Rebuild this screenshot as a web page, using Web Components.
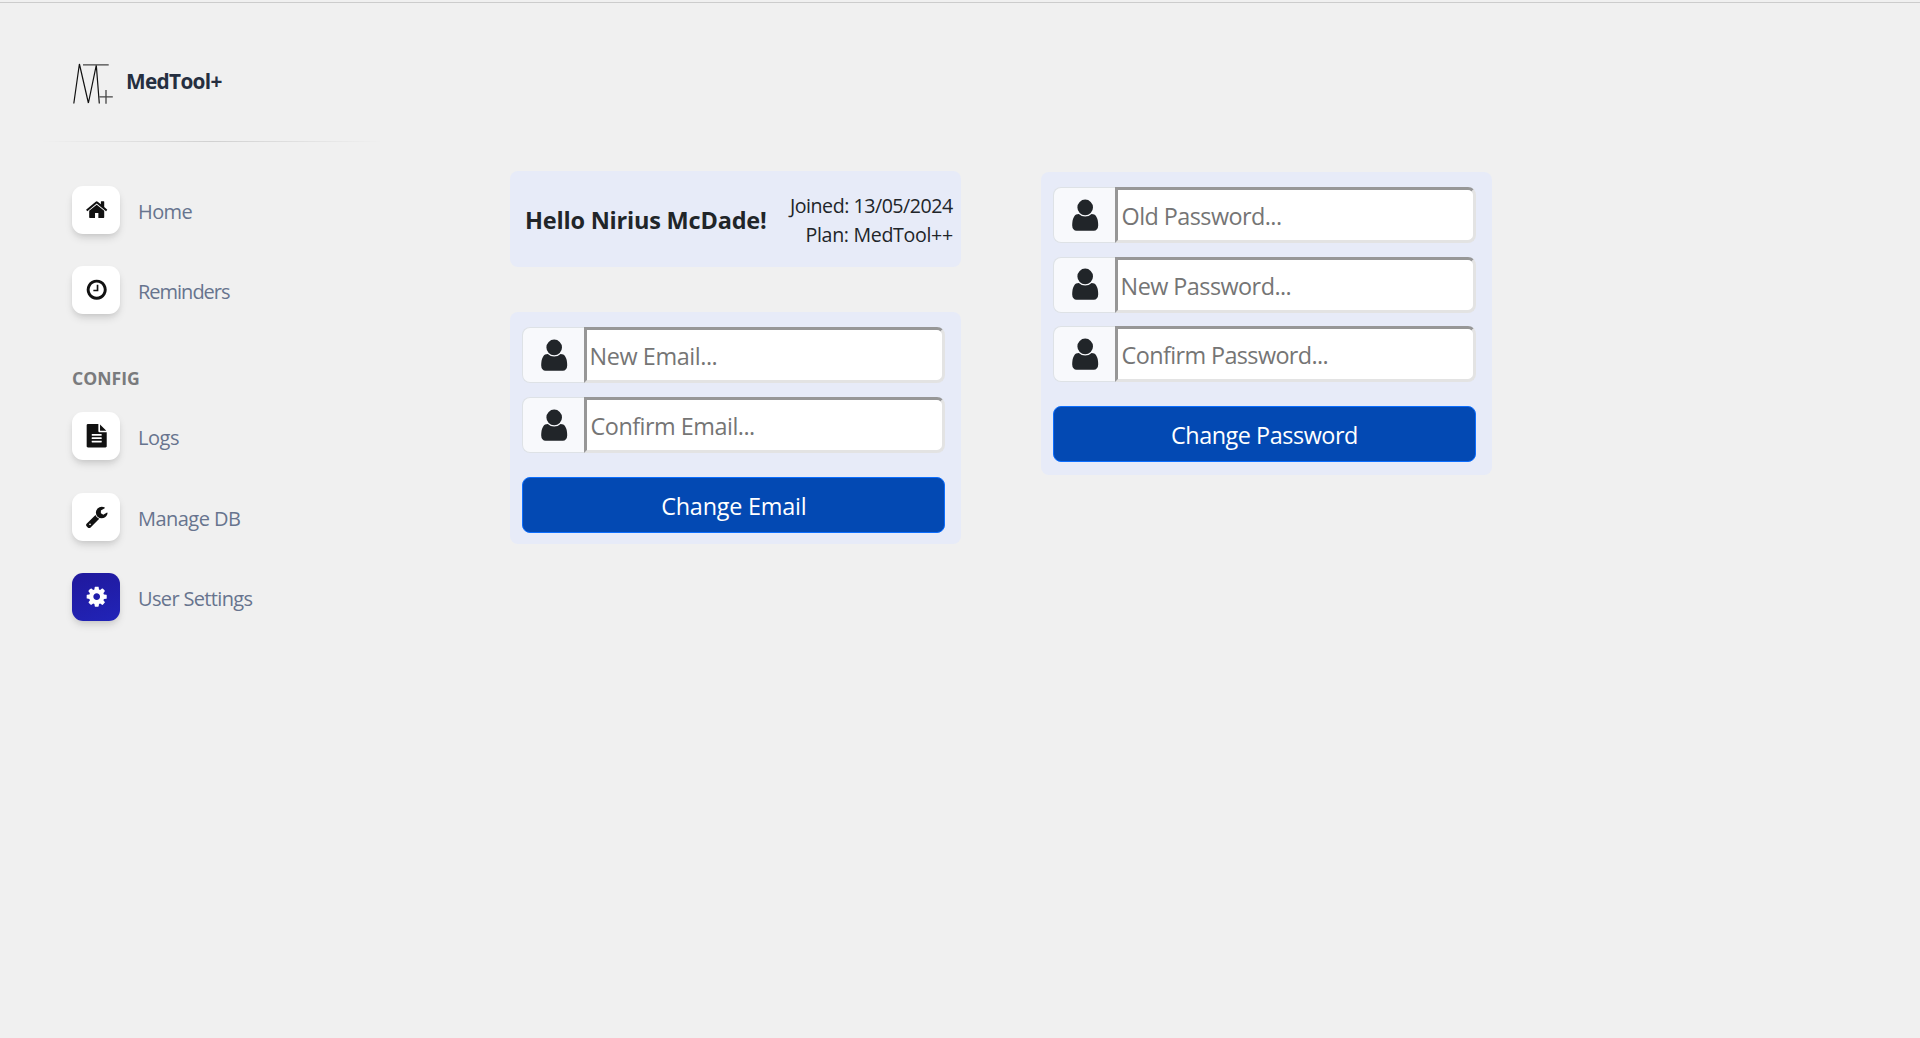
<!DOCTYPE html>
<html lang="en">
<head>
<meta charset="utf-8">
<title>MedTool+ | User Settings</title>
<style>
  html, body { margin: 0; height: 100%; }
  body { background: #f0f0f0; font-family: "Open Sans", "Noto Sans", sans-serif; overflow: hidden; }
</style>
</head>
<body>
<med-app></med-app>
<script>
const ICONS = {
  home: "M1472 992v480q0 26-19 45t-45 19h-384v-384h-256v384h-384q-26 0-45-19t-19-45v-480q0-1 .5-3t.5-3l575-474 575 474q1 2 1 6zm223-69l-62 74q-8 9-21 11h-3q-13 0-21-7l-692-577-692 577q-12 8-24 7-13-2-21-11l-62-74q-8-10-7-23.5t11-21.5l719-599q32-26 76-26t76 26l244 204v-195q0-14 9-23t23-9h192q14 0 23 9t9 23v408l219 182q10 8 11 21.5t-7 23.5z",
  clock: "M1024 544v448q0 14-9 23t-23 9h-320q-14 0-23-9t-9-23v-64q0-14 9-23t23-9h224v-352q0-14 9-23t23-9h64q14 0 23 9t9 23zm416 352q0-148-73-273t-198-198-273-73-273 73-198 198-73 273 73 273 198 198 273 73 273-73 198-198 73-273zm224 0q0 209-103 385.5t-279.5 279.5-385.5 103-385.5-103-279.5-279.5-103-385.5 103-385.5 279.5-279.5 385.5-103 385.5 103 279.5 279.5 103 385.5z",
  file: "M1596 476q14 14 28 36h-472v-472q22 14 36 28zm-476 164h544v1056q0 40-28 68t-68 28h-1344q-40 0-68-28t-28-68v-1600q0-40 28-68t68-28h800v544q0 40 28 68t68 28zm160 736v-64q0-14-9-23t-23-9h-704q-14 0-23 9t-9 23v64q0 14 9 23t23 9h704q14 0 23-9t9-23zm0-256v-64q0-14-9-23t-23-9h-704q-14 0-23 9t-9 23v64q0 14 9 23t23 9h704q14 0 23-9t9-23zm0-256v-64q0-14-9-23t-23-9h-704q-14 0-23 9t-9 23v64q0 14 9 23t23 9h704q14 0 23-9t9-23z",
  wrench: "M448 1472q0-26-19-45t-45-19-45 19-19 45 19 45 45 19 45-19 19-45zm644-420l-682 682q-37 37-90 37-52 0-91-37l-106-108q-38-36-38-90 0-53 38-91l681-681q39 98 114.5 173.5t173.5 114.5zm634-435q0 39-23 106-47 134-164.5 217.5t-258.5 83.5q-185 0-316.5-131.5t-131.5-316.5 131.5-316.5 316.5-131.5q58 0 121.5 16.5t107.5 46.5q16 11 16 28t-16 28l-293 169v224l193 107q5-3 79-48.5t135.5-81 70.5-35.5q15 0 23.5 10t8.5 25z",
  cog: "M1152 896q0-106-75-181t-181-75-181 75-75 181 75 181 181 75 181-75 75-181zm512-109v222q0 12-8 23t-20 13l-185 28q-19 54-39 91 35 50 107 138 10 12 10 25t-9 23q-27 37-99 108t-94 71q-12 0-26-9l-138-108q-44 23-91 38-16 136-29 186-7 28-36 28h-222q-14 0-24.5-8.5t-11.5-21.5l-28-184q-49-16-90-37l-141 107q-10 9-25 9-14 0-25-11-126-114-165-168-7-10-7-23 0-12 8-23 15-21 51-66.5t54-70.5q-27-50-41-99l-183-27q-13-2-21-12.5t-8-23.5v-222q0-12 8-23t19-13l186-28q14-46 39-92-40-57-107-138-10-12-10-24 0-10 9-23 26-36 98.5-107.5t94.5-71.5q13 0 26 10l138 107q44-23 91-38 16-136 29-186 7-28 36-28h222q14 0 24.5 8.5t11.5 21.5l28 184q49 16 90 37l142-107q9-9 24-9 13 0 25 10 129 119 165 170 7 8 7 22 0 12-8 23-15 21-51 66.5t-54 70.5q26 50 41 98l183 28q13 2 21 12.5t8 23.5z",
  user: "M1536 1399q0 109-62.5 187t-150.5 78h-854q-88 0-150.5-78t-62.5-187q0-85 8.5-160.5t31.5-152 58.5-131 94-89 134.5-34.5q131 128 313 128t313-128q76 0 134.5 34.5t94 89 58.5 131 31.5 152 8.5 160.5zm-256-887q0 159-112.5 271.5t-271.5 112.5-271.5-112.5-112.5-271.5 112.5-271.5 271.5-112.5 271.5 112.5 112.5 271.5z"
};

// Letter spacing and left bearing that make a string's visible extent equal to a width.
const pen = document.createElement("canvas").getContext("2d");
function track(text, style, width) {
  pen.font = `${style.fontWeight} ${style.fontSize} ${style.fontFamily}`;
  const m = pen.measureText(text);
  const ink = m.actualBoundingBoxLeft + m.actualBoundingBoxRight;
  return { spacing: (width - ink) / (text.length - 1), bearing: -m.actualBoundingBoxLeft };
}

class Base extends HTMLElement {
  connectedCallback() {
    if (!this.shadowRoot) this.attachShadow({ mode: "open" }).innerHTML = this.view();
    this.ready();
  }
  ready() {}
}

customElements.define("fit-text", class extends Base {
  view() {
    return `<style>
      :host { display: block; white-space: nowrap; flex: none; text-align: left; }
      span { display: block; }
    </style><span><slot></slot></span>`;
  }
  ready() {
    const width = +this.getAttribute("width");
    const t = track(this.textContent, getComputedStyle(this), width);
    this.style.width = width + "px";
    const span = this.shadowRoot.querySelector("span");
    span.style.letterSpacing = t.spacing + "px";
    span.style.marginLeft = -t.bearing + "px";
    span.style.marginRight = "-8px";
  }
});

customElements.define("fa-icon", class extends Base {
  view() {
    return `<style>
      :host { display: block; width: 23.4px; height: 23.4px; flex: none; }
      svg { display: block; width: 100%; height: 100%; fill: currentColor; overflow: visible; }
    </style><svg viewBox="0 0 1792 1792"><path d="${ICONS[this.getAttribute("name")]}"/></svg>`;
  }
});

customElements.define("med-brand", class extends Base {
  view() {
    return `<style>
      :host { display: flex; align-items: flex-start; gap: 14px; padding: 0 0 0 32px; height: 79px;
              font-size: 20.8px; font-weight: 700; color: #252f40; line-height: 30px; }
      svg { display: block; width: 41px; height: 42px; flex: none; fill: none; stroke: #111; stroke-width: 1.2; }
      fit-text { margin-top: 4px; }
    </style>
    <svg viewBox="72 62 41 42">
      <path d="M73.8 103.5L79.4 64L88.4 103L96.3 65.2L99.3 103.5" stroke-linejoin="bevel"/>
      <path d="M83 64.8H108.7M99.3 96.8H112.8M106 90V103.8" stroke="#444" stroke-width="1.3"/>
    </svg>
    <fit-text width="94.5">MedTool+</fit-text>`;
  }
});

customElements.define("nav-item", class extends Base {
  view() {
    return `<style>
      :host { display: flex; align-items: center; height: 48px; gap: 19px; padding-left: 32px;
              font-size: 20px; line-height: 30px; color: #67748e; }
      .tile { display: flex; align-items: center; justify-content: center; width: 48px; height: 48px;
              padding-left: 1px; box-sizing: border-box; flex: none; border-radius: 11px; background: #fff; color: #111;
              box-shadow: 0 5px 8px -1px rgba(20,20,20,.12), 0 3px 5px -1px rgba(20,20,20,.07); }
      :host([active]) .tile { background: linear-gradient(160deg, #20189c, #2124b8); color: #fff; }
      fit-text { margin-top: 4px; }
    </style>
    <div class="tile"><fa-icon name="${this.getAttribute("icon")}"></fa-icon></div>
    <fit-text width="${this.getAttribute("span")}">${this.getAttribute("label")}</fit-text>`;
  }
});

customElements.define("nav-side", class extends Base {
  view() {
    return `<style>
      :host { display: flex; flex-direction: column; width: 350px; flex: none; padding: 59px 0 0 40px; box-sizing: content-box; }
      hr { width: 344px; height: 1px; margin: 0; border: 0;
           background: linear-gradient(90deg, transparent, rgba(0,0,0,.13), transparent); }
      nav { display: flex; flex-direction: column; gap: 32px; }
      .first { padding-top: 44px; }
      .second { padding-top: 14px; gap: 32.5px; }
      h6 { margin: 51px 0 0 33px; font-size: 17.6px; line-height: 27px; height: 33px; font-weight: 700; color: #7a7b7d; }
    </style>
    <med-brand></med-brand>
    <hr>
    <nav class="first">
      <nav-item icon="home" label="Home" span="53.5"></nav-item>
      <nav-item icon="clock" label="Reminders" span="91"></nav-item>
    </nav>
    <h6><fit-text width="66">CONFIG</fit-text></h6>
    <nav class="second">
      <nav-item icon="file" label="Logs" span="40"></nav-item>
      <nav-item icon="wrench" label="Manage DB" span="101"></nav-item>
      <nav-item icon="cog" label="User Settings" span="113.5" active></nav-item>
    </nav>`;
  }
});

customElements.define("soft-card", class extends Base {
  view() {
    return `<style>
      :host { display: flex; box-sizing: border-box; width: 451px; border-radius: 8px; background: #e7ebf8; color: #212529; }
    </style><slot></slot>`;
  }
});

customElements.define("user-summary", class extends Base {
  view() {
    return `<style>
      :host { display: block; }
      soft-card { height: 96px; justify-content: space-between; padding: 0 8px 0 17px; align-items: center; }
      h5 { margin: 2px 0 0; font-size: 23.5px; line-height: 30px; font-weight: 700; }
      .meta { display: flex; flex-direction: column; align-items: flex-end; font-size: 19.6px; line-height: 29px; padding-top: 1px; }
    </style>
    <soft-card>
      <h5><fit-text width="239">Hello Nirius McDade!</fit-text></h5>
      <div class="meta">
        <fit-text width="165">Joined: 13/05/2024</fit-text>
        <fit-text width="146.5">Plan: MedTool++</fit-text>
      </div>
    </soft-card>`;
  }
});

customElements.define("input-row", class extends Base {
  view() {
    return `<style>
      :host { display: flex; height: 56px; font-size: 23.4px; }
      .addon { display: flex; align-items: center; justify-content: center; box-sizing: border-box; width: 62px; flex: none;
               padding-left: 1px; border: 1px solid #dee2e6; border-right: 0; border-radius: 8px 0 0 8px; background: #f8f9fc; color: #212529; }
      fa-icon { width: 36.4px; height: 36.4px; }
      input { flex: 1; min-width: 0; box-sizing: border-box; margin: 0; padding: 2px 0 0; outline: 0; background: #fff;
              border: 3px solid; border-color: #979797 #e3e3e3 #e3e3e3 #979797; border-radius: 0 8px 8px 0;
              font: inherit; color: #212529; }
      input::placeholder { color: #757575; opacity: 1; }
    </style>
    <div class="addon"><fa-icon name="user"></fa-icon></div>
    <input type="text" placeholder="${this.getAttribute("label")}">`;
  }
  ready() {
    const input = this.shadowRoot.querySelector("input");
    const t = track(input.placeholder, getComputedStyle(input), +this.getAttribute("span"));
    input.style.letterSpacing = t.spacing + "px";
    input.style.paddingLeft = Math.max(0, 4.6 - t.bearing) + "px";
  }
});

customElements.define("settings-form", class extends Base {
  view() {
    return `<style>
      :host { display: block; }
      soft-card { flex-direction: column; padding: 15px 16px 0 12px; height: var(--form-height); }
      .rows { display: flex; flex-direction: column; gap: var(--row-gap, 14px); }
      button { margin: 24px 0 0; padding: 2px 0 0; height: 56px; box-sizing: border-box; flex: none; display: flex; align-items: center; justify-content: center;
               border: 1px solid #0d6efd; border-radius: 8px; background: #0349b3; color: #fff;
               font: 23.4px/32px "Open Sans", "Noto Sans", sans-serif; }
    </style>
    <soft-card>
      <div class="rows"><slot></slot></div>
      <button type="button"><fit-text width="${this.getAttribute("span")}">${this.getAttribute("action")}</fit-text></button>
    </soft-card>`;
  }
});

customElements.define("med-app", class extends Base {
  view() {
    return `<style>
      :host { display: flex; flex-direction: column; height: 100vh; box-sizing: border-box; padding-top: 2px; }
      .page { flex: 1; display: flex; border-top: 1px solid #ccc; }
      main { display: flex; gap: 80px; padding: 168px 0 0 120px; align-items: flex-start; }
      .column { display: flex; flex-direction: column; gap: 45px; }
      .email { --form-height: 232px; }
      .password { --form-height: 303px; --row-gap: 13.5px; margin-top: 1px; }
    </style>
    <div class="page">
      <nav-side></nav-side>
      <main>
        <div class="column">
          <user-summary></user-summary>
          <settings-form class="email" action="Change Email" span="142.6">
            <input-row label="New Email..." span="125"></input-row>
            <input-row label="Confirm Email..." span="162.5"></input-row>
          </settings-form>
        </div>
        <settings-form class="password" action="Change Password" span="185">
          <input-row label="Old Password..." span="158.3"></input-row>
          <input-row label="New Password..." span="168"></input-row>
          <input-row label="Confirm Password..." span="205"></input-row>
        </settings-form>
      </main>
    </div>`;
  }
});
</script>
</body>
</html>
